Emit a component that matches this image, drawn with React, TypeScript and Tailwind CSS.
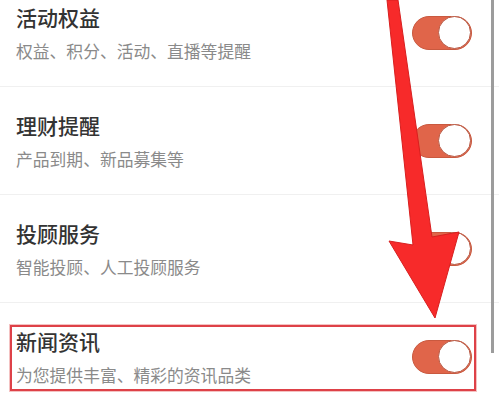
import React from "react";

const rows = [
  { title: "活动权益", sub: "权益、积分、活动、直播等提醒" },
  { title: "理财提醒", sub: "产品到期、新品募集等" },
  { title: "投顾服务", sub: "智能投顾、人工投顾服务" },
  { title: "新闻资讯", sub: "为您提供丰富、精彩的资讯品类" },
];

function Toggle() {
  return (
    <div className="w-[60px] h-[34px] rounded-full bg-[#e0654a] border border-[#c9593f] flex items-center justify-end shrink-0">
      <div className="w-[33px] h-[33px] rounded-full bg-white border border-[#b85a45]" />
    </div>
  );
}

export default function App() {
  return (
    <div
      className="relative w-[499px] h-[406px] overflow-hidden bg-white"
      style={{ fontFamily: '"Noto Sans CJK SC", "Noto Sans", sans-serif' }}
    >
      <div className="-mt-[21px] flex flex-col">
        {rows.map((r, i) => (
          <div
            key={i}
            className="relative h-[108px] shrink-0 flex items-center justify-between pl-4 pr-[27px] border-b border-[#f0f0f0]"
          >
            <div className="flex flex-col">
              <div className="text-[21px] leading-[28px] font-medium text-[#333333]">{r.title}</div>
              <div className="mt-[9px] text-[16.8px] leading-[22px] text-[#8a8a8a]">{r.sub}</div>
            </div>
            <Toggle />
            {i === 3 && (
              <div className="absolute left-[10px] top-[22px] w-[466px] h-[66px] border-2 border-[#de4148] shadow-[0_0_0_1px_rgba(230,120,120,0.45)]" />
            )}
          </div>
        ))}
      </div>
      <div className="absolute left-[491px] top-0 w-[3px] h-[353px] bg-[#9c9c9c]" />
      <svg className="absolute left-0 top-0" width="499" height="406" viewBox="0 0 499 406">
        <polygon
          points="387,0 398,0 432,237 459,232 435,318 389,241 413,245"
          fill="#f72a2a"
          stroke="#d81f1f"
          strokeWidth="1"
          strokeLinejoin="round"
        />
      </svg>
    </div>
  );
}
